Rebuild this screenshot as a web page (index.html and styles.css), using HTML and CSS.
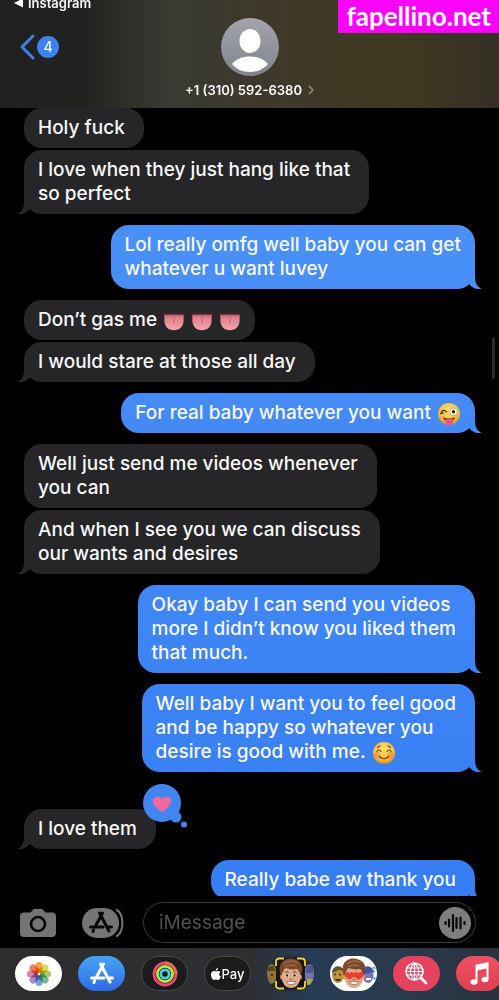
FILE: index.html
```html
<!DOCTYPE html>
<html lang="en">
<head>
	<meta charset="UTF-8">
	<meta name="viewport" content="width=device-width, initial-scale=1">
	<title>Messages</title>
	<link rel="stylesheet" href="styles.css">
</head>
<body>
	<a class="site-tag" href="#">fapellino.net</a>
	<header class="header">
		<a class="return" href="#">
			<svg width="10" height="10" viewBox="0 0 10 10"><path d="M0 5L9 0.5v9z" fill="#fff"/></svg>
			Instagram
		</a>
		<div class="bar">
			<a class="back" href="#" aria-label="Back, 4 unread">
				<svg width="15" height="26" viewBox="0 0 15 26"><path d="M13 2L2 13l11 11" fill="none" stroke="#3c82e4" stroke-width="3" stroke-linecap="round" stroke-linejoin="round"/></svg>
				<span class="unread">4</span>
			</a>
			<a class="contact" href="#">
				<svg width="58" height="58" viewBox="0 0 58 58">
					<defs>
						<linearGradient id="avatar" x1="0" y1="0" x2="0" y2="1"><stop offset="0" stop-color="#a1a4ac"/><stop offset="1" stop-color="#81848d"/></linearGradient>
					</defs>
					<circle cx="29" cy="29" r="29" fill="url(#avatar)"/>
					<ellipse cx="29" cy="23" rx="10.500" ry="12" fill="#fff"/>
					<path d="M11 46c4-5 10-7.500 18-7.500s14 2.500 18 7.500c-4 5-10 8-18 8s-14-3-18-8z" fill="#fff"/>
				</svg>
				<span class="number">+1 (310) 592-6380
					<svg width="6" height="10" viewBox="0 0 6 10"><path d="M1 1l4 4-4 4" fill="none" stroke="#8d8b84" stroke-width="1.500"/></svg>
				</span>
			</a>
		</div>
	</header>

	<main class="thread">
		<ul class="group in">
			<li class="bubble">Holy fuck</li>
			<li class="bubble">I love when they just hang like that<br>so perfect</li>
		</ul>
		<ul class="group out">
			<li class="bubble snug">Lol really omfg well baby you can get<br>whatever u want luvey</li>
		</ul>
		<ul class="group in">
			<li class="bubble snug">Don’t gas me
				<svg class="emoji" role="img" aria-label="tongue" viewBox="0 0 24 24"><use href="#tongue"/></svg>
				<svg class="emoji" role="img" aria-label="tongue" viewBox="0 0 24 24"><use href="#tongue"/></svg>
				<svg class="emoji" role="img" aria-label="tongue" viewBox="0 0 24 24"><use href="#tongue"/></svg>
			</li>
			<li class="bubble">I would stare at those all day</li>
		</ul>
		<ul class="group out">
			<li class="bubble snug">For real baby whatever you want
				<svg class="emoji" role="img" aria-label="winking face with tongue" viewBox="0 0 24 24">
					<circle cx="12" cy="12" r="11" fill="url(#face)"/>
					<path d="M4.500 9.500c1.500-1.500 3.500-1.500 5 .5M3.500 11.500l3-.7" fill="none" stroke="#5b3a10" stroke-width="1.300" stroke-linecap="round"/>
					<circle cx="16.500" cy="9.800" r="3.800" fill="#fff" stroke="#a87a28" stroke-width=".6"/>
					<circle cx="16.500" cy="9.800" r="1.700" fill="#34220f"/>
					<path d="M6 15c4 2 8 2 12 0-.5 3-3 4.500-6 4.500S6.500 18 6 15z" fill="#65300f"/>
					<path d="M8.500 16.500c2.500.8 5 .8 7.500 0v3.500c0 4-7.500 4-7.500 0z" fill="#f3508a"/>
				</svg>
			</li>
		</ul>
		<ul class="group in">
			<li class="bubble">Well just send me videos whenever<br>you can</li>
			<li class="bubble">And when I see you we can discuss<br>our wants and desires</li>
		</ul>
		<ul class="group out">
			<li class="bubble">Okay baby I can send you videos<br>more I didn’t know you liked them<br>that much.</li>
		</ul>
		<ul class="group out">
			<li class="bubble">Well baby I want you to feel good<br>and be happy so whatever you<br>desire is good with me.
				<svg class="emoji" role="img" aria-label="smiling face" viewBox="0 0 24 24">
					<circle cx="12" cy="12" r="11" fill="url(#face)"/>
					<circle cx="5.500" cy="14" r="3" fill="#f5793b" opacity=".5"/>
					<circle cx="18.500" cy="14" r="3" fill="#f5793b" opacity=".5"/>
					<path d="M5 10.500c1-2 3-2 4 0M15 10.500c1-2 3-2 4 0M7.500 15.500c2.500 3 6.500 3 9 0M5.500 6.500c.8-1 1.500-1.300 2.500-1.300M18.500 6.500c-.8-1-1.500-1.300-2.500-1.300" fill="none" stroke="#70400f" stroke-width="1.200" stroke-linecap="round"/>
				</svg>
			</li>
		</ul>
		<ul class="group in reacted">
			<li class="bubble">I love them
				<svg class="tapback" role="img" aria-label="Loved" width="46" height="46" viewBox="0 0 46 46">
					<g fill="#4185f1"><circle cx="20" cy="19" r="19"/><circle cx="34" cy="33" r="5.500"/><circle cx="42" cy="40.500" r="3"/></g>
					<path d="M20 28c-5-3.300-9-6.500-9-10.800 0-5 6.200-6.600 9-2.200 2.800-4.400 9-2.800 9 2.200C29 21.500 25 24.700 20 28z" fill="#f0689d"/>
				</svg>
			</li>
		</ul>
		<ul class="group out">
			<li class="bubble">Really babe aw thank you</li>
		</ul>
		<div class="scrollbar"></div>
	</main>

	<form class="composer">
		<button class="plain" type="button" aria-label="Camera">
			<svg width="36" height="28" viewBox="0 0 36 28">
				<path d="M4 3.500h6.500L13 .8C13.500.3 14 0 15 0h6c1 0 1.500.3 2 .8l2.500 2.700H32c2.500 0 4 1.500 4 4V24c0 2.500-1.500 4-4 4H4c-2.500 0-4-1.500-4-4V7.500c0-2.500 1.500-4 4-4z" fill="#747476"/>
				<circle cx="18" cy="15" r="7" fill="none" stroke="#050506" stroke-width="2.600"/>
			</svg>
		</button>
		<button class="plain" type="button" aria-label="Apps">
			<svg width="42" height="30" viewBox="0 0 42 30">
				<path d="M34 1.500c8.500 4 8.500 23 0 27" fill="none" stroke="#747476" stroke-width="2"/>
				<rect width="37" height="30" rx="15" fill="#747476"/>
				<g transform="translate(7 3)" stroke="#08080a"><use href="#appmark"/></g>
			</svg>
		</button>
		<div class="field">
			<input type="text" placeholder="iMessage" aria-label="iMessage">
			<button class="plain" type="button" aria-label="Record audio">
				<svg width="32" height="32" viewBox="0 0 32 32">
					<circle cx="16" cy="16" r="16" fill="#7e7e80"/>
					<path d="M6.500 15v2M10 12.500v7M14 8v16M17.500 11v10M21.500 10.500v11M25.500 15v2" stroke="#08080a" stroke-width="2.200" stroke-linecap="round"/>
				</svg>
			</button>
		</div>
	</form>

	<nav class="apps">
		<button class="app photos" aria-label="Photos">
			<svg width="26" height="26" viewBox="-13 -13 26 26">
				<g class="petals">
					<rect x="-3.500" y="-12" width="7" height="11" rx="3.500" fill="#f7a63c"/>
					<rect x="-3.500" y="-12" width="7" height="11" rx="3.500" fill="#e4d84a" transform="rotate(45)"/>
					<rect x="-3.500" y="-12" width="7" height="11" rx="3.500" fill="#a9cb63" transform="rotate(90)"/>
					<rect x="-3.500" y="-12" width="7" height="11" rx="3.500" fill="#70bd9c" transform="rotate(135)"/>
					<rect x="-3.500" y="-12" width="7" height="11" rx="3.500" fill="#7a9fda" transform="rotate(180)"/>
					<rect x="-3.500" y="-12" width="7" height="11" rx="3.500" fill="#a78bcb" transform="rotate(225)"/>
					<rect x="-3.500" y="-12" width="7" height="11" rx="3.500" fill="#d684a4" transform="rotate(270)"/>
					<rect x="-3.500" y="-12" width="7" height="11" rx="3.500" fill="#f07c62" transform="rotate(315)"/>
				</g>
			</svg>
		</button>
		<button class="app store" aria-label="App Store">
			<svg width="24" height="24" viewBox="0 0 24 24" stroke="#fff"><use href="#appmark"/></svg>
		</button>
		<button class="app dark" aria-label="Fitness">
			<svg width="26" height="26" viewBox="0 0 26 26" fill="none" stroke-width="2.800">
				<circle cx="13" cy="13" r="11" stroke="#f2466e"/>
				<path d="M13 2A11 11 0 0 1 24 13" stroke="#ee6a45"/>
				<circle cx="13" cy="13" r="7.600" stroke="#b4ea4b"/>
				<circle cx="13" cy="13" r="4.200" stroke="#45d5d2"/>
			</svg>
		</button>
		<button class="app dark pay" aria-label="Apple Pay">
			<svg width="10" height="12" viewBox="0 0 10 12"><path d="M7 0c.1 1.500-1 2.800-2.300 2.800C4.500 1.400 5.700.2 7 0zM9.300 4.300c-1.800 1.100-1.400 3.500.5 4.200C9.200 10.200 8.200 12 7 12c-.8 0-1.100-.5-2-.5s-1.300.5-2 .5C1.500 12 0 9.200 0 6.800c0-2.400 1.500-3.700 3-3.700.9 0 1.500.5 2.100.5S6.400 3 7.300 3c.8 0 1.500.5 2 1.300z" fill="#fff"/></svg>Pay
		</button>
		<button class="app" aria-label="Memoji">
			<svg width="47" height="35" viewBox="0 0 47 35">
				<rect width="47" height="35" fill="#222a35"/>
				<ellipse cx="4" cy="18" rx="6" ry="10" fill="#8c7433"/><path d="M0 14c2-5 7-5 8-1v2H0z" fill="#55451f"/><circle cx="5" cy="19" r="1" fill="#241a0a"/>
				<ellipse cx="43" cy="18" rx="6" ry="10" fill="#7773ac"/><path d="M39 13c2-5 7-5 8-1l-1 5h-7z" fill="#4c588c"/><path d="M40 23h6v6h-6z" fill="#b5a645"/>
				<rect x="9" y="2" width="29" height="31" rx="5" fill="#171512"/>
				<path d="M9 10V6c0-2.500 1-3.500 3.500-3.500H17M30 2.500h4.500C37 2.500 38 3.500 38 6v4M38 25v4c0 2.500-1 3.500-3.500 3.500H30M17 32.500h-4.500C10 32.500 9 31.500 9 29v-4" fill="none" stroke="#f1d932" stroke-width="1.800"/>
				<use href="#boy"/>
				<g fill="#fff"><ellipse cx="20" cy="19.500" rx="2" ry="1.600"/><ellipse cx="27.500" cy="19.500" rx="2" ry="1.600"/></g>
				<g fill="#2c1b12"><circle cx="20" cy="19.500" r="1.200"/><circle cx="27.500" cy="19.500" r="1.200"/></g>
				<path d="M18 16.500c1-.8 2.500-.8 3.500 0M26 16.500c1-.8 2.500-.8 3.500 0" fill="none" stroke="#5c3520"/>
			</svg>
		</button>
		<button class="app memoji" aria-label="Memoji Stickers">
			<svg width="47" height="35" viewBox="0 0 47 35">
				<ellipse cx="8" cy="19" rx="6" ry="8" fill="#bd9433"/><path d="M2 17c0-8 10-9 12-2l-5-1z" fill="#67513a"/><path d="M5 23h6c-1 3-5 3-6 0z" fill="#4a2a16"/><path d="M4 18.500h2M9 18.500h2" stroke="#3c2814" stroke-width="1.500"/>
				<ellipse cx="38" cy="19" rx="5.500" ry="8" fill="#7777c2"/><path d="M32 15c1-6 9-6 11-1l2 2-12 2z" fill="#3f55a5"/><path d="M36 22h5v2h-5z" fill="#fff"/><path d="M43 11l2 2M44 21l1 3" stroke="#59a5ed" stroke-width="2"/>
				<use href="#boy"/>
				<path d="M19.500 24c-3-2-5-3.500-5-5.500 0-3 4-3.500 5-1 1-2.500 5-2 5 1 0 2-2 3.500-5 5.500zM28.500 24c-3-2-5-3.500-5-5.500 0-3 4-3.500 5-1 1-2.500 5-2 5 1 0 2-2 3.500-5 5.500z" fill="#ee3a30"/>
			</svg>
		</button>
		<button class="app images" aria-label="Images">
			<svg width="23" height="23" viewBox="0 0 23 23" fill="none" stroke="#fff">
				<circle cx="9.500" cy="9.500" r="8.500" stroke-width="1.700"/>
				<path d="M2 6h15M1 9.500h17M2 13h15M9.500 1v17M9.500 1C4 6 4 13 9.500 18M9.500 1c5.500 5 5.500 12 0 17" stroke-width="1.200"/>
				<path d="M16 16l5 5" stroke-width="2.600" stroke-linecap="round"/>
			</svg>
		</button>
		<button class="app music" aria-label="Music">
			<svg width="19" height="23" viewBox="0 0 19 23" fill="#fff">
				<path d="M5.500 2.800L18.500 0v17h-2V6.500l-9 2V20h-2z"/><ellipse cx="4" cy="20" rx="3.500" ry="2.800"/><ellipse cx="15" cy="17.500" rx="3.500" ry="2.800"/>
			</svg>
		</button>
	</nav>

	<!-- shared shapes -->
	<svg class="defs" width="0" height="0" aria-hidden="true">
		<defs>
			<radialGradient id="face" cx=".5" cy=".35" r=".65"><stop offset="0" stop-color="#fee36b"/><stop offset=".65" stop-color="#f8c143"/><stop offset="1" stop-color="#dd8e22"/></radialGradient>
			<linearGradient id="flesh" x1="0" y1="0" x2="0" y2="1"><stop offset="0" stop-color="#7d3841"/><stop offset=".3" stop-color="#e07f8b"/><stop offset="1" stop-color="#f3a5ac"/></linearGradient>
			<g id="tongue">
				<path d="M0 2c4 2.500 8 2 12 2s8 .5 12-2c-1.500 2.500-1.500 5-1.500 8.500C22.500 18 18.500 22 12 22S1.500 18 1.500 10.500C1.500 7 1.500 4.500 0 2z" fill="url(#flesh)"/>
				<path d="M0 2c4 2.500 8 2 12 2s8 .5 12-2c-.6 1-1 2-1.200 3H1.200C1 4 .6 3 0 2z" fill="#3a191d"/>
				<path d="M12 8v6" stroke="#cf6776" stroke-width="2" stroke-linecap="round" opacity=".7"/>
			</g>
			<g id="appmark" fill="none" stroke-width="3" stroke-linecap="round">
				<path d="M13.500 2L6 16M10.500 2L20 20M1.500 16H14M18.500 16h4M4.500 19L4 20.500"/>
			</g>
			<g id="boy">
				<path d="M13.500 20c-1-10 3-14 10-14s12 5 10.500 14z" fill="#69402a"/>
				<ellipse cx="14.500" cy="21" rx="1.500" ry="2.500" fill="#c98f6c"/>
				<ellipse cx="33.500" cy="21" rx="1.500" ry="2.500" fill="#c98f6c"/>
				<ellipse cx="24" cy="21" rx="9.500" ry="11" fill="#dfa988"/>
				<path d="M13.500 18C10 7 18 2 24 2.500s14 4 10.500 15.500c-1-3-2-4-4-5-5 1-9 0-12-1-2 1-3 3-5 6z" fill="#7b4a2e"/>
				<path d="M17 8c4-3.500 9-4 14-1.500M18 11c3-2 7-2.500 11-1" fill="none" stroke="#a26b43" stroke-width="1.300"/>
				<path d="M19.500 25.500h9c-1 4-8 4-9 0z" fill="#fff" stroke="#7c4433" stroke-width=".6"/>
				<path d="M23 23.500h2" stroke="#b07553" stroke-width="1.500" stroke-linecap="round"/>
			</g>
		</defs>
	</svg>
</body>
</html>
```
FILE: styles.css
```css
*{
	box-sizing: border-box;
	margin: 0;
	padding: 0;
}
body{
	position: relative;
	display: flex;
	flex-direction: column;
	height: 100vh;
	overflow: hidden;
	background-color: #000;
	color: #f8f8f8;
	font-family: Inter, "Liberation Sans", sans-serif;
	font-size: 19px;
	font-weight: 500;
}
a{
	color: inherit;
	text-decoration: none;
}
ul{
	list-style: none;
}
button, input{
	border: none;
	background: none;
	font: inherit;
	color: inherit;
}
svg{
	flex: none;
}
.defs{
	position: absolute;
}
.site-tag{
	position: absolute;
	top: 0;
	right: 0;
	z-index: 2;
	padding: 0 8px;
	background-color: #f0f;
	color: #fff;
	font-family: Lato, sans-serif;
	font-size: 26px;
	font-weight: 700;
	line-height: 33px;
}

/* header */
.header{
	flex: none;
	padding-bottom: 10px;
	overflow: hidden;
	background: linear-gradient(90deg, #202020 0%, #222221 17%, #393a32 33%, #3d392b 50%, #40381f 80%, #343026 100%);
}
.return{
	display: flex;
	align-items: center;
	gap: 4px;
	margin: -6px 0 6px 14px;
	font-size: 13px;
	font-weight: 600;
	line-height: 18px;
}
.bar{
	display: grid;
	grid-template-columns: 1fr auto 1fr;
	align-items: start;
}
.back{
	display: flex;
	align-items: center;
	gap: 2px;
	padding: 16px 0 0 20px;
}
.unread{
	width: 22px;
	border-radius: 50%;
	background-color: #3c82f0;
	font-size: 14px;
	line-height: 22px;
	text-align: center;
}
.contact{
	display: flex;
	flex-direction: column;
	align-items: center;
	gap: 6px;
}
.number{
	display: flex;
	align-items: center;
	gap: 6px;
	font-size: 13px;
	font-weight: 600;
	line-height: 16px;
}

/* conversation */
.thread{
	position: relative;
	display: flex;
	flex: 1;
	flex-direction: column;
	gap: 11px;
	min-height: 0;
	padding: 0 24px;
	overflow: hidden;
}
.group{
	display: flex;
	flex: none;
	flex-direction: column;
	align-items: flex-start;
	gap: 2px;
}
.group.out{
	align-items: flex-end;
}
.group.reacted{
	margin-top: 26px;
}
.bubble{
	position: relative;
	padding: 8px 19px 8px 14px;
	border-radius: 18px;
	background-color: #262628;
	line-height: 24px;
}
.bubble.snug{
	padding-right: 14px;
}
.out .bubble{
	background: linear-gradient(#5096fa, #337af2) fixed;
}
.bubble:last-child:after{
	content: "";
	position: absolute;
	bottom: 0;
	left: -7px;
	width: 18px;
	height: 20px;
	background: inherit;
	clip-path: path("M7 0V7C7 14 5 18 0 20C5 21 10 19 13 15L17 4V0Z");
}
.out .bubble:last-child:after{
	left: auto;
	right: -7px;
	clip-path: path("M11 0V7C11 14 13 18 18 20C13 21 8 19 5 15L1 4V0Z");
}
.emoji{
	width: 24px;
	height: 24px;
	margin: -2px 0 -2px 1px;
	vertical-align: -5px;
}
.in .emoji{
	width: 22px;
	height: 22px;
	vertical-align: -4px;
}
.tapback{
	position: absolute;
	top: -25px;
	right: -32px;
}
.scrollbar{
	position: absolute;
	top: 29%;
	right: 4px;
	width: 3px;
	height: 42px;
	border-radius: 2px;
	background-color: #2a2a2a;
}

/* message field */
.composer{
	display: flex;
	flex: none;
	align-items: center;
	gap: 26px;
	padding: 6px 23px 5px 20px;
}
.plain{
	display: flex;
	flex: none;
	cursor: pointer;
}
.field{
	display: flex;
	flex: 1;
	align-items: center;
	min-width: 0;
	height: 41px;
	margin-left: -7px;
	padding: 0 4px 0 15px;
	border: 1px solid #3a3a3c;
	border-radius: 21px;
}
.field input{
	flex: 1;
	min-width: 0;
	outline: none;
	font-weight: 400;
}
.field input::placeholder{
	color: #515154;
	opacity: 1;
}

/* app strip */
.apps{
	display: flex;
	flex: none;
	gap: 16px;
	padding: 8px 15px 9px;
	overflow: hidden;
	background: linear-gradient(90deg, #2d2d2f 0%, #2d2e31 50%, #263c55 62%, #2a3a4c 80%, #29323d 100%);
}
.app{
	display: flex;
	flex: none;
	align-items: center;
	justify-content: center;
	width: 47px;
	height: 35px;
	border-radius: 18px;
	overflow: hidden;
	cursor: pointer;
}
.photos, .memoji{
	background-color: #fff;
}
.petals rect{
	mix-blend-mode: multiply;
}
.store{
	background: linear-gradient(#45a5f5, #2f6be6);
}
.dark{
	border: 1px solid #48484a;
	background-color: #1b1b1c;
}
.pay{
	gap: 1px;
	font-size: 13px;
}
.images{
	background-color: #e5425f;
}
.music{
	background: linear-gradient(#ee5262, #df3f50);
}
```
